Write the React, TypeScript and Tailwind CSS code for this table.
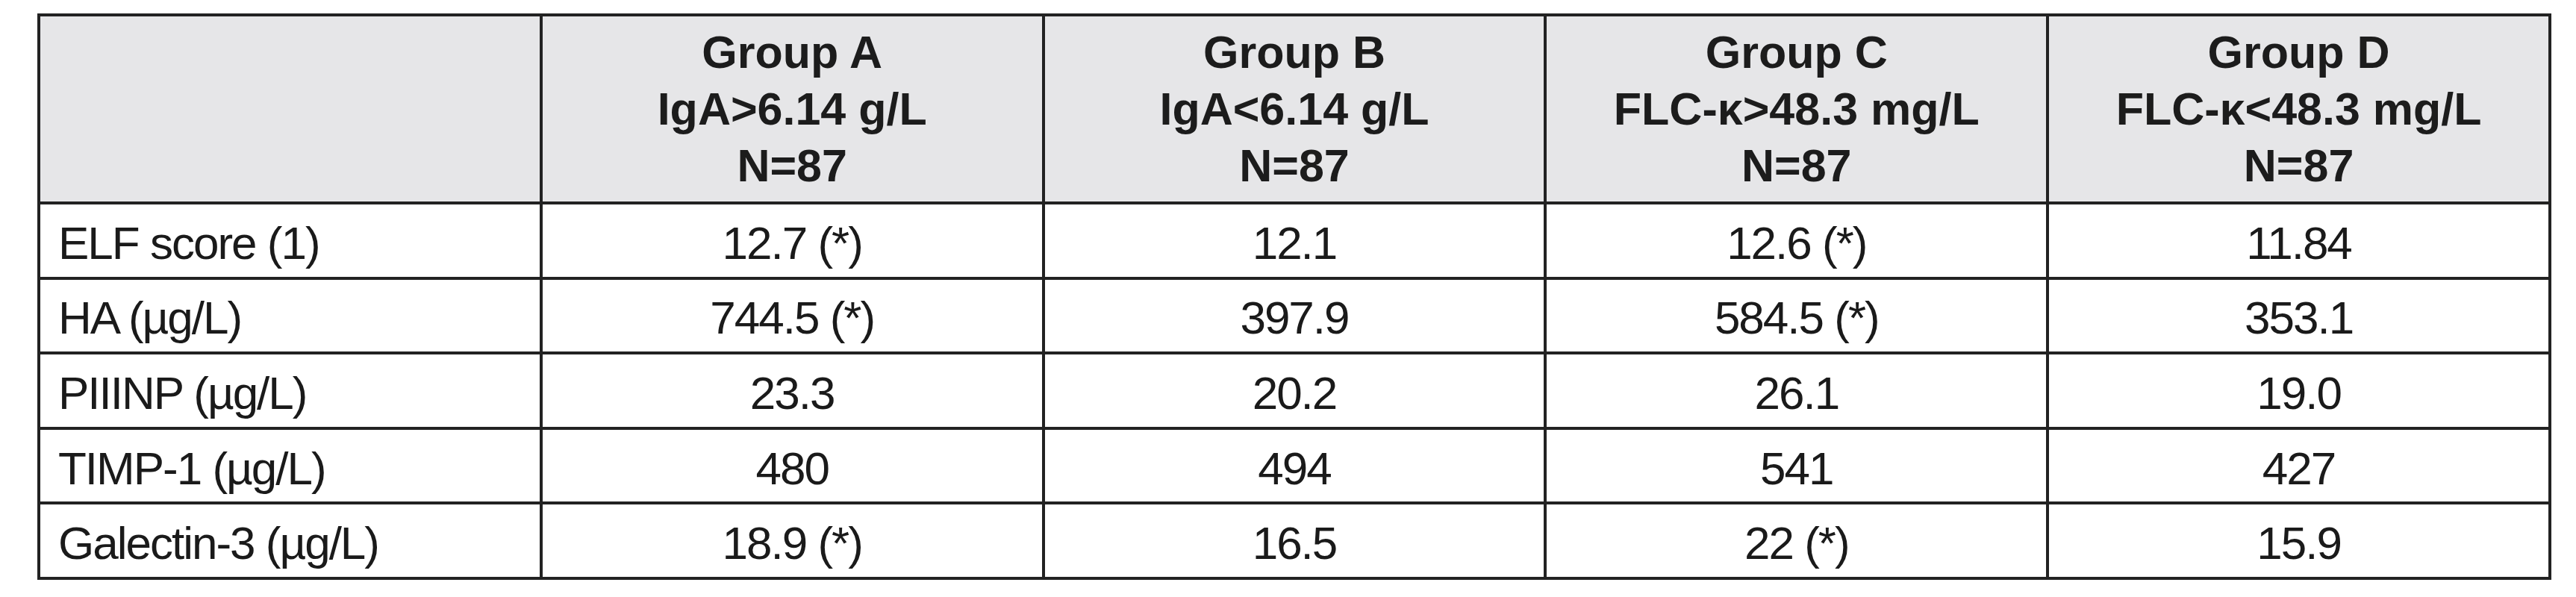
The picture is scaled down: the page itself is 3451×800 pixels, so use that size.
import React from "react";

const headers = [
  { g: "Group A", c: "IgA>6.14 g/L" },
  { g: "Group B", c: "IgA<6.14 g/L" },
  { g: "Group C", c: "FLC-κ>48.3 mg/L" },
  { g: "Group D", c: "FLC-κ<48.3 mg/L" },
];

const rows: [string, string[]][] = [
  ["ELF score (1)", ["12.7 (*)", "12.1", "12.6 (*)", "11.84"]],
  ["HA (µg/L)", ["744.5 (*)", "397.9", "584.5 (*)", "353.1"]],
  ["PIIINP (µg/L)", ["23.3", "20.2", "26.1", "19.0"]],
  ["TIMP-1 (µg/L)", ["480", "494", "541", "427"]],
  ["Galectin-3 (µg/L)", ["18.9 (*)", "16.5", "22 (*)", "15.9"]],
];

export default function App() {
  return (
    <div className="w-[3451px] h-[800px] bg-white pt-[18px] pl-[50px] font-['Liberation_Sans',Arial,sans-serif]">
      <div className="w-[3368px] grid grid-cols-5 grid-rows-[248px_repeat(5,96.6px)] gap-[4px] bg-[#222222] p-[4px]">
        <div className="bg-[#e6e6e8]" />
        {headers.map((h) => (
          <div
            key={h.g}
            className="bg-[#e6e6e8] flex flex-col items-center justify-center text-center text-[61px] leading-[76px] font-bold text-[#1c1c1c]"
          >
            <div>{h.g}</div>
            <div>{h.c}</div>
            <div>N=87</div>
          </div>
        ))}
        {rows.map(([label, vals]) => (
          <React.Fragment key={label}>
            <div className="bg-white flex items-center pl-[24px] pt-[6px] text-[62px] tracking-[-2px] text-[#1a1a1a]">
              {label}
            </div>
            {vals.map((v, i) => (
              <div
                key={i}
                className="bg-white flex items-center justify-center pt-[6px] text-[62px] tracking-[-2px] text-[#1a1a1a]"
              >
                {v}
              </div>
            ))}
          </React.Fragment>
        ))}
      </div>
    </div>
  );
}
